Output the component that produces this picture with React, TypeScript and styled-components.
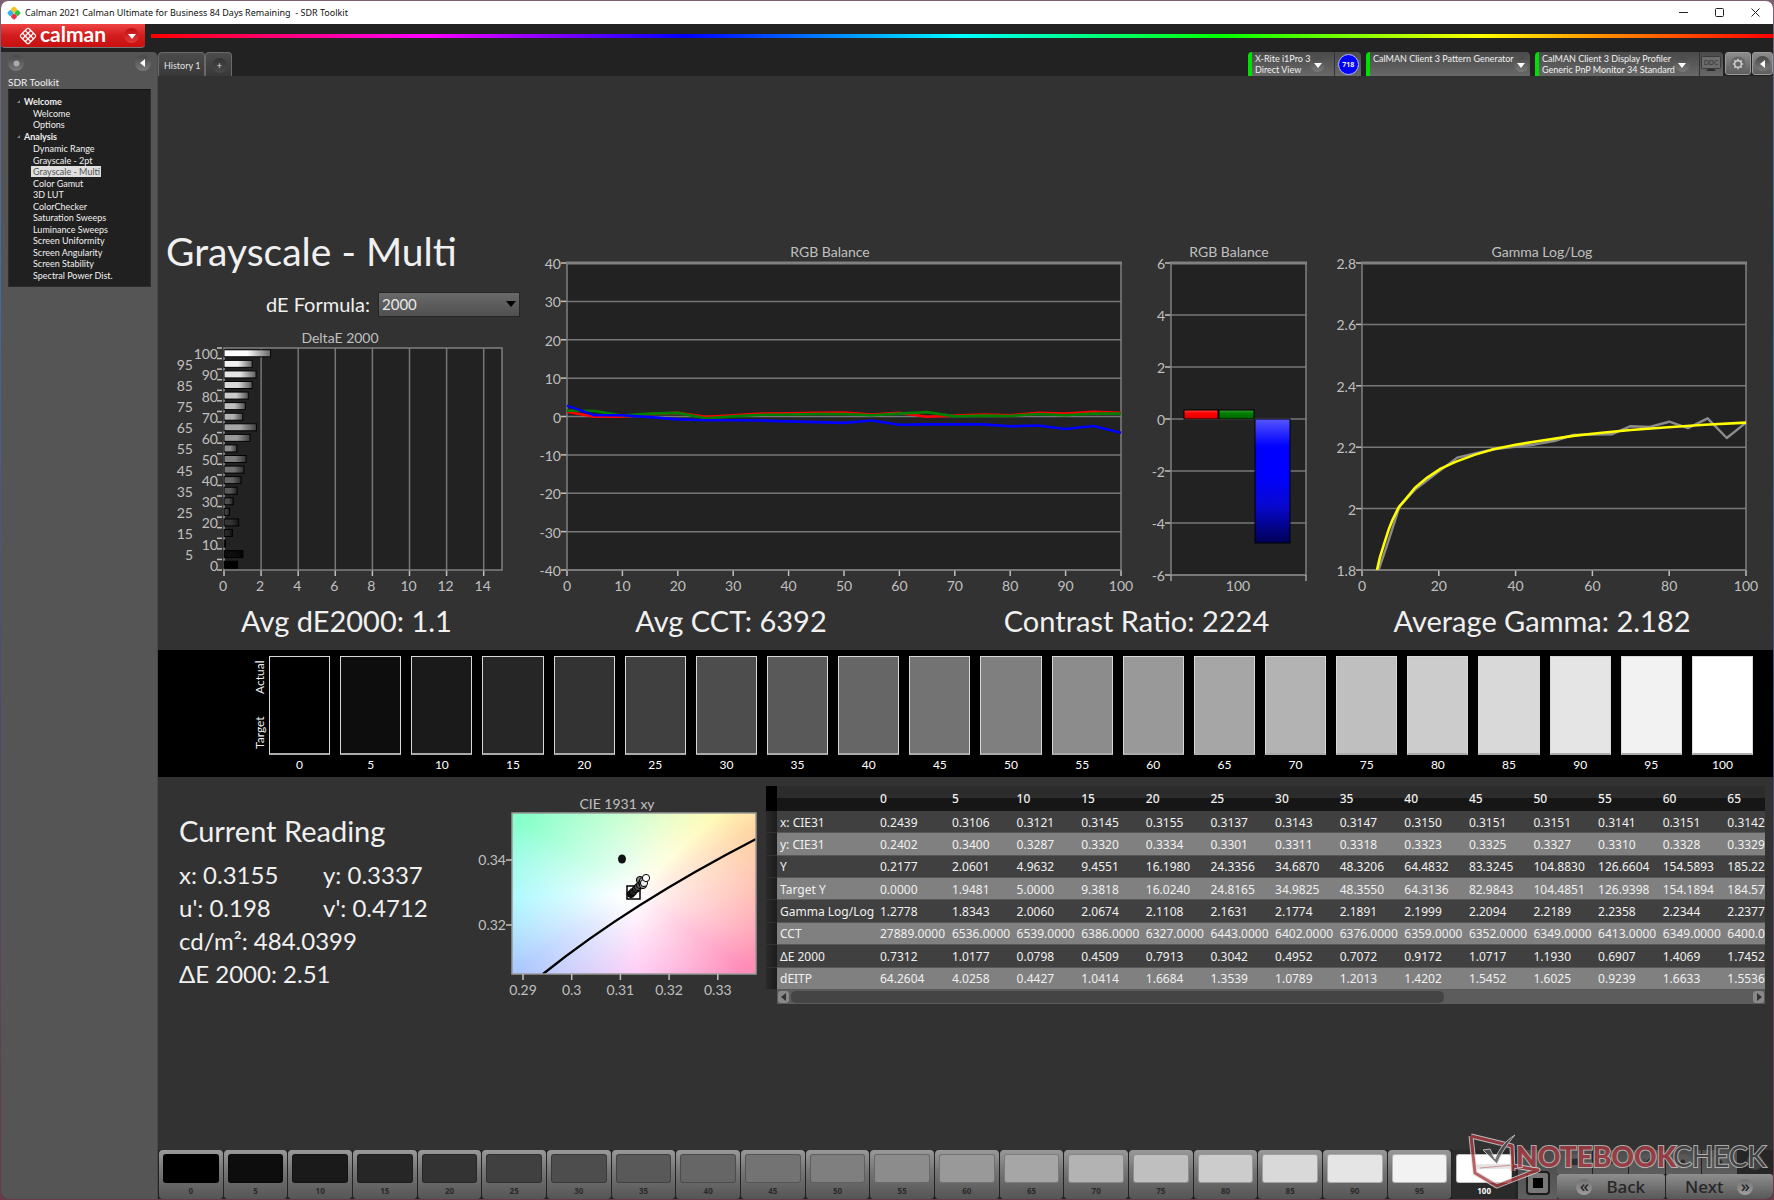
import React from "react";
import styled, { createGlobalStyle, css } from "styled-components";

const UI = `Lato, "Open Sans", sans-serif`;
const SYS = `"Noto Sans", "Open Sans", sans-serif`;

const Global = createGlobalStyle`
  * { box-sizing: border-box; }
  body { margin: 0; background: linear-gradient(#7d6070, #3f6f9f 20%, #4a4a70 60%, #6b3a4a); font-family: ${UI}; color: #f0f0f0; }
  button { font-family: inherit; border: 0; padding: 0; margin: 0; cursor: pointer; }
  ul { list-style: none; margin: 0; padding: 0; }
  svg { display: block; }
`;

/* ---------- data ---------- */

const LEVELS = Array.from({ length: 21 }, (_, i) => i * 5);
const DELTA_E = [
  0.7312, 1.0177, 0.0798, 0.4509, 0.7913, 0.3042, 0.4952, 0.7072, 0.9172, 1.0717, 1.193,
  0.6907, 1.4069, 1.7452, 1.01, 1.15, 1.31, 1.52, 1.73, 1.52, 2.51,
];
const BAL_RED = [1.5, 0.2, 0.2, 0.9, 1.2, 0.2, 0.6, 1.0, 1.1, 1.2, 1.3, 0.8, 1.2, 0.2, 0.5, 0.8, 0.6, 1.2, 1.0, 1.5, 1.2];
const BAL_GREEN = [1.8, 1.7, 0.5, 1.0, 1.2, -0.2, 0.3, 0.7, 0.8, 0.9, 0.9, 0.6, 1.0, 1.4, 0.3, 0.5, 0.4, 0.9, 0.6, 1.0, 1.0];
const BAL_BLUE = [3.1, 0.6, 0.6, 0.1, -0.5, -0.7, -0.7, -0.8, -1.0, -1.2, -1.4, -0.8, -1.9, -1.8, -1.8, -1.8, -2.3, -2.1, -3.0, -2.2, -4.0];

const GAMMA_TARGET: [number, number][] = [
  [3.9, 1.8], [4.7, 1.843], [5.8, 1.887], [6.9, 1.93], [7.9, 1.962], [9.5, 2.003], [11.7, 2.036],
  [13.8, 2.068], [17, 2.101], [20.5, 2.13], [24.5, 2.153], [29.3, 2.175], [34.2, 2.193], [40, 2.208],
  [46.5, 2.221], [55, 2.237], [62.5, 2.247], [70, 2.256], [79.7, 2.265], [89.3, 2.273], [100, 2.28],
];
const GAMMA_MEASURED: [number, number][] = [
  [4.3, 1.8], [6.4, 1.876], [9.8, 2.008], [14, 2.064], [19.7, 2.118], [24.8, 2.166], [30, 2.181],
  [34.8, 2.194], [45, 2.209], [50.3, 2.221], [55, 2.24], [65, 2.242], [69.8, 2.268], [74.9, 2.266],
  [80, 2.283], [84.9, 2.262], [90, 2.294], [95, 2.23], [100, 2.28],
];

const TABLE: [string, string[]][] = [
  ["x: CIE31", ["0.2439", "0.3106", "0.3121", "0.3145", "0.3155", "0.3137", "0.3143", "0.3147", "0.3150", "0.3151", "0.3151", "0.3141", "0.3151", "0.3142"]],
  ["y: CIE31", ["0.2402", "0.3400", "0.3287", "0.3320", "0.3334", "0.3301", "0.3311", "0.3318", "0.3323", "0.3325", "0.3327", "0.3310", "0.3328", "0.3329"]],
  ["Y", ["0.2177", "2.0601", "4.9632", "9.4551", "16.1980", "24.3356", "34.6870", "48.3206", "64.4832", "83.3245", "104.8830", "126.6604", "154.5893", "185.22"]],
  ["Target Y", ["0.0000", "1.9481", "5.0000", "9.3818", "16.0240", "24.8165", "34.9825", "48.3550", "64.3136", "82.9843", "104.4851", "126.9398", "154.1894", "184.57"]],
  ["Gamma Log/Log", ["1.2778", "1.8343", "2.0060", "2.0674", "2.1108", "2.1631", "2.1774", "2.1891", "2.1999", "2.2094", "2.2189", "2.2358", "2.2344", "2.2377"]],
  ["CCT", ["27889.0000", "6536.0000", "6539.0000", "6386.0000", "6327.0000", "6443.0000", "6402.0000", "6376.0000", "6359.0000", "6352.0000", "6349.0000", "6413.0000", "6349.0000", "6400.0"]],
  ["ΔE 2000", ["0.7312", "1.0177", "0.0798", "0.4509", "0.7913", "0.3042", "0.4952", "0.7072", "0.9172", "1.0717", "1.1930", "0.6907", "1.4069", "1.7452"]],
  ["dEITP", ["64.2604", "4.0258", "0.4427", "1.0414", "1.6684", "1.3539", "1.0789", "1.2013", "1.4202", "1.5452", "1.6025", "0.9239", "1.6633", "1.5536"]],
];

const TREE = [
  { name: "Welcome", items: ["Welcome", "Options"] },
  {
    name: "Analysis",
    items: [
      "Dynamic Range", "Grayscale - 2pt", "Grayscale - Multi", "Color Gamut", "3D LUT", "ColorChecker",
      "Saturation Sweeps", "Luminance Sweeps", "Screen Uniformity", "Screen Angularity", "Screen Stability",
      "Spectral Power Dist.",
    ],
  },
];

const gray = (pct: number) => {
  const v = Math.round(pct * 2.55);
  return `rgb(${v}, ${v}, ${v})`;
};

/* ---------- window frame ---------- */

const Window = styled.div`
  min-height: calc(100vh - 2px);
  margin: 1px;
  display: flex;
  flex-direction: column;
  border-radius: 7px;
  overflow: hidden;
  background: #222;
`;
const TitleBar = styled.header`
  height: 23px;
  display: flex;
  align-items: center;
  gap: 4px;
  padding-left: 6px;
  background: #fff;
  color: #111;
  font: 9px/14px ${SYS};
  white-space: pre;
`;
const WindowControls = styled.div`
  margin-left: auto;
  display: flex;
`;
const WindowButton = styled.button`
  width: 36px;
  height: 23px;
  background: none;
  display: grid;
  place-items: center;
`;
const Banner = styled.div`
  height: 28px;
  display: flex;
  align-items: flex-start;
  gap: 6px;
`;
const Brand = styled.button`
  width: 144px;
  height: 24px;
  display: flex;
  align-items: center;
  padding-left: 17px;
  color: #fff;
  border-radius: 0 0 4px 4px;
  background: linear-gradient(#e44, #d31d1d 50%, #c81010);
  border-bottom: 1px solid #777;
`;
const BrandName = styled.span`
  width: 86px;
  text-align: left;
  padding: 0 0 4px 2px;
  font: 700 21px/20px ${UI};
`;
const Rainbow = styled.div`
  flex: 1;
  height: 4px;
  margin-top: 10px;
  background: linear-gradient(90deg, #f00, #f0f 17%, #00f 33%, #0ff 50%, #0f0 66%, #ff0 82%, #f80 90%, #f00);
`;
const Round = styled.span<{ $size: number; $dark?: boolean }>`
  width: ${(p) => p.$size}px;
  height: ${(p) => p.$size}px;
  border-radius: 50%;
  display: grid;
  place-items: center;
  flex: none;
  background: ${(p) => (p.$dark ? "linear-gradient(#333, #4a4a4a)" : "linear-gradient(#484848, #7a7a7a)")};
`;
const StepMark = styled(Round)`
  background: linear-gradient(#707070, #a0a0a0);
  line-height: 14px;
  padding-bottom: 4px;
`;
const BrandArrow = styled(Round)`
  background: linear-gradient(#c01010, #e23a3a);
`;
const Body = styled.div`
  flex: 1;
  display: flex;
`;

/* ---------- sidebar ---------- */

const Sidebar = styled.nav`
  width: 157px;
  flex: none;
  background: #555;
  border-radius: 0 5px 0 0;
  border-right: 1px solid #484848;
  padding: 3px 6px 0 7px;
`;
const SideTop = styled.div`
  display: flex;
  justify-content: space-between;
  height: 20px;
`;
const SideButton = styled.button`
  background: none;
  height: 16px;
`;
const SideTitle = styled.div`
  font: 10px/14px ${UI};
`;
const Tree = styled.div`
  height: 198px;
  padding: 5px 0 0 8px;
  background: #202020;
  border: 1px solid #2d2d2d;
  border-top-color: #151515;
  font: 9px/11px ${UI};
`;
const TreeHead = styled.div`
  height: 12px;
  display: flex;
  align-items: center;
  gap: 4px;
  font-weight: 700;
`;
const TreeList = styled.ul<{ $rows: number }>`
  display: grid;
  grid-auto-rows: 1fr;
  height: ${(p) => (p.$rows > 2 ? 139 : 23)}px;
  margin-left: 14px;
  padding-top: 1px;
`;
const TreeItem = styled.a<{ $on: boolean }>`
  display: inline-block;
  padding: 0 1px 0 2px;
  color: inherit;
  text-decoration: none;
  ${(p) => p.$on && css`
    color: #555;
    background: #e0e0e0;
  `}
`;

/* ---------- tab bar ---------- */

const Main = styled.main`
  flex: 1;
  min-width: 0;
  display: flex;
  flex-direction: column;
  background: #323232;
`;
const TabBar = styled.div`
  height: 24px;
  display: flex;
  align-items: stretch;
  background: #222;
  font: 9px/11px ${UI};
`;
const Tab = styled.button`
  padding: 1px 4px 0 5px;
  min-width: 27px;
  height: 24px;
  display: grid;
  place-items: center;
  background: linear-gradient(#4c4c4c, #383838);
  border: 1px solid #6a6a6a;
  border-bottom: 0;
  border-radius: 4px 4px 0 0;
  color: #e4e4e4;
  font: 9px/11px ${UI};
`;
const Devices = styled.div`
  margin-left: auto;
  display: flex;
  gap: 5px;
`;
const Device = styled.div<{ $w: number }>`
  width: ${(p) => p.$w}px;
  display: flex;
  border-left: 4px solid #00e000;
  border-radius: 4px 4px 0 0;
  background: linear-gradient(#4a4a4a, #686868);
`;
const DeviceMain = styled.button`
  flex: 1;
  display: flex;
  align-items: center;
  justify-content: space-between;
  padding: 1px 9px 0 3px;
  background: none;
  color: #f0f0f0;
  font: 9px/11px ${UI};
  text-align: left;
  white-space: nowrap;
`;
const DeviceText = styled.span`
  align-self: flex-start;
`;
const DeviceSide = styled.div`
  width: 27px;
  display: grid;
  place-items: center;
  border-left: 1px solid #333;
`;
const Badge = styled.span`
  width: 21px;
  height: 21px;
  border-radius: 50%;
  border: 1px solid #b8b8ff;
  background: #00f;
  font: 700 7px/19px ${SYS};
  text-align: center;
`;
const Tools = styled.div`
  display: flex;
  gap: 1px;
  margin-left: -3px;
`;
const ToolButton = styled.button<{ $w: number }>`
  width: ${(p) => p.$w}px;
  height: 23px;
  display: grid;
  place-items: center;
  border: 1px solid #9a9a9a;
  border-radius: 3px;
  background: linear-gradient(#8c8c8c, #5e5e5e);
`;

/* ---------- content ---------- */

const Content = styled.div`
  flex: 1;
  display: flex;
  flex-direction: column;
  justify-content: center;
`;
const ChartRow = styled.section`
  display: grid;
  grid-template-columns: minmax(0, 372fr) minmax(0, 610fr) minmax(0, 190fr) minmax(0, 443fr);
`;
const Chart = styled.svg`
  width: 100%;
  height: auto;
  font: 14px ${UI};
  fill: #c0c0c0;
`;
const Heading = styled.h1`
  margin: 0;
  padding: 0 0 4px 8px;
  font: 400 39px/58px ${UI};
`;
const Formula = styled.div`
  height: 42px;
  display: flex;
  justify-content: flex-end;
  align-items: center;
  gap: 8px;
  padding: 0 10px 2px 0;
  font: 20px/24px ${UI};
`;
const SelectBox = styled.span`
  display: grid;
  align-items: center;
  width: 142px;
`;
const Select = styled.select`
  grid-area: 1 / 1;
  appearance: none;
  height: 25px;
  padding: 0 3px;
  border: 1px solid #262626;
  border-radius: 0;
  background: linear-gradient(#696969, #505050);
  color: #e8e8e8;
  font: 15px/20px ${UI};
`;
const SelectArrow = styled.svg`
  grid-area: 1 / 1;
  justify-self: end;
  margin-right: 4px;
  pointer-events: none;
`;
const Averages = styled.section`
  display: grid;
  grid-template-columns: 377fr 392fr 419fr 392fr 35fr;
  height: 50px;
  padding-bottom: 8px;
  font: 29px/42px ${UI};
  text-align: center;
  white-space: nowrap;
`;

const Strip = styled.section`
  height: 127px;
  display: flex;
  background: #000;
  padding: 6px 20px 0 95px;
`;
const StripLabels = styled.div`
  width: 16px;
  height: 98px;
  display: flex;
  flex-direction: column;
  justify-content: space-between;
  font: 12px/14px ${UI};
`;
const Vertical = styled.span`
  writing-mode: vertical-rl;
  transform: rotate(180deg);
  text-align: center;
  height: 42px;
`;
const Swatches = styled.div`
  flex: 1;
  display: grid;
  grid-template-columns: repeat(21, minmax(0, 1fr));
  gap: 10px;
`;
const SwatchCell = styled.div`
  font: 12px/20px ${UI};
  text-align: center;
  color: #fff;
`;
const Swatch = styled.div`
  height: 99px;
  border: 1px solid #d8d8d8;
  border-bottom: 2px solid #aaa;
`;

const Lower = styled.section`
  display: grid;
  grid-template-columns: minmax(0, 302fr) minmax(0, 306fr) minmax(0, 999fr);
  padding-right: 8px;
`;
const Reading = styled.div`
  padding: 32px 0 0 21px;
`;
const ReadingTitle = styled.h2`
  margin: 0 0 5px;
  font: 400 29px/44px ${UI};
`;
const ReadingGrid = styled.div`
  display: grid;
  grid-template-columns: 144px 1fr;
  font: 24px/33px ${UI};
  white-space: nowrap;
`;
const ReadingWide = styled.span`
  grid-column: 1 / -1;
`;

const TableArea = styled.div`
  padding-top: 9px;
  min-width: 0;
`;
const TableClip = styled.div`
  overflow: hidden;
`;
const DataTable = styled.table`
  width: 1023px;
  height: 204px;
  table-layout: fixed;
  border-collapse: collapse;
  font: 12px/16px ${SYS};
  text-align: left;
  color: #f0f0f0;
`;
const Corner = styled.th`
  width: 11px;
  padding: 0;
  background: #000;
`;
const Gutter = styled.td`
  padding: 0;
  background: linear-gradient(90deg, #2a2a2a, #1c1c1c);
  border-bottom: 1px solid #303030;
`;
const HeadCell = styled.th<{ $w?: number }>`
  height: 25px;
  width: ${(p) => (p.$w ? `${p.$w}px` : "auto")};
  padding: 0 3px;
  font-weight: 500;
  background: linear-gradient(#2c2c2c 50%, #161616 50%);
`;
const Row = styled.tr<{ $alt: boolean }>`
  background: ${(p) => (p.$alt ? "#808080" : "#404040")};
  border-bottom: 1px solid #585858;
`;
const RowHead = styled.th`
  padding: 2px 3px 0;
  font-weight: 400;
  white-space: nowrap;
`;
const Cell = styled.td`
  padding: 2px 3px 0;
  white-space: nowrap;
`;
const ScrollBar = styled.div`
  margin-left: 11px;
  height: 14px;
  padding: 1px;
  display: flex;
  align-items: center;
  gap: 2px;
  background: #5c5c5c;
`;
const ScrollButton = styled.button`
  width: 11px;
  height: 12px;
  display: grid;
  place-items: center;
  border-radius: 3px;
  background: #888;
`;
const ScrollTrack = styled.div`
  flex: 1;
`;
const ScrollThumb = styled.div`
  width: 68%;
  height: 12px;
  border-radius: 5px;
  background: #444;
`;

/* ---------- footer ---------- */

const Footer = styled.footer`
  position: relative;
  height: 49px;
  display: flex;
  background: #232323;
`;
const Patches = styled.div`
  flex: 1;
  display: grid;
  grid-template-columns: repeat(21, minmax(0, 1fr));
  gap: 1px;
  padding: 0 2px 0 1px;
`;
const Patch = styled.button<{ $on: boolean }>`
  display: flex;
  flex-direction: column;
  padding: 4px 4px 0;
  border-radius: 4px;
  background: ${(p) => (p.$on ? "#2a2a2a" : "linear-gradient(#999, #777 40%, #555)")};
  color: ${(p) => (p.$on ? "#fff" : "#2a2a2a")};
  font: 700 8px/16px ${SYS};
  text-align: center;
`;
const PatchColor = styled.span`
  height: 29px;
  border-radius: 3px;
  border: 1px solid rgba(0, 0, 0, 0.25);
`;
const StopPanel = styled.div`
  width: 39px;
  display: flex;
  flex-direction: column;
  align-items: center;
  justify-content: flex-end;
  padding-bottom: 4px;
  background: linear-gradient(#484848, #606060);
`;
const StopButton = styled.button`
  width: 24px;
  height: 24px;
  border: 2px solid #1c1c1c;
  border-radius: 4px;
  background: #777;
  display: grid;
  place-items: center;
`;
const StopMark = styled.span`
  width: 10px;
  height: 10px;
  background: #000;
`;
const Transport = styled.div`
  width: 216px;
  display: grid;
  grid-template-rows: 24px 25px;
`;
const Keys = styled.div`
  display: grid;
  grid-template-columns: repeat(6, 1fr);
  gap: 1px;
`;
const Key = styled.button<{ $off?: boolean }>`
  display: grid;
  place-items: center;
  background: ${(p) => (p.$off ? "#262626" : "linear-gradient(#4c4c4c, #5e5e5e)")};
`;
const Steps = styled.div`
  display: grid;
  grid-template-columns: 1fr 1fr;
  gap: 1px;
`;
const Step = styled.button`
  display: flex;
  align-items: center;
  justify-content: center;
  gap: 14px;
  border-radius: 3px;
  background: linear-gradient(#8e8e8e, #585858);
  color: #262626;
  font: 500 17px/20px ${SYS};
`;
const Watermark = styled.svg`
  position: absolute;
  right: 0;
  bottom: 10px;
  pointer-events: none;
`;

/* ---------- drawings ---------- */

const Caret = ({ dir = "down", color = "#fff", size = 8 }: { dir?: "down" | "left" | "right"; color?: string; size?: number }) => {
  const d = { down: "M0 2h8L4 7z", left: "M6 0v8L1 4z", right: "M2 0v8l5-4z" }[dir];
  return (
    <svg width={size} height={size} viewBox="0 0 8 8" aria-hidden="true">
      <path d={d} fill={color} />
    </svg>
  );
};

const AppIcon = () => (
  <svg width="14" height="14" viewBox="0 0 14 14" aria-hidden="true">
    <g transform="rotate(45 7 7)">
      <rect x="2" y="2" width="5" height="5" rx="1.5" fill="#f6c416" />
      <rect x="7" y="2" width="5" height="5" rx="1.5" fill="#35c43a" />
      <rect x="2" y="7" width="5" height="5" rx="1.5" fill="#2bb5e8" />
      <rect x="7" y="7" width="5" height="5" rx="1.5" fill="#f0304a" />
    </g>
  </svg>
);

const BrandMark = () => (
  <svg width="20" height="20" viewBox="0 0 20 20" aria-hidden="true">
    <g transform="rotate(45 10 10)">
      <rect x="3.5" y="3.5" width="13" height="13" rx="2.5" fill="#fff" />
      {[0, 1, 2].map((r) =>
        [0, 1, 2].map((c) => (
          <rect key={`${r}${c}`} x={4.7 + c * 3.9} y={4.7 + r * 3.9} width="2.8" height="2.8" rx="1" fill="#d62222" />
        ))
      )}
    </g>
  </svg>
);

const Gear = () => (
  <svg width="16" height="16" viewBox="0 0 16 16" aria-hidden="true">
    <circle cx="8" cy="8" r="7.5" fill="#666" />
    <g stroke="#ccc" strokeWidth="1.6">
      {[0, 45, 90, 135].map((a) => (
        <path key={a} d="M8 2.8v10.4" transform={`rotate(${a} 8 8)`} />
      ))}
    </g>
    <circle cx="8" cy="8" r="3.3" fill="#666" stroke="#ccc" strokeWidth="1.4" />
  </svg>
);

const DdcIcon = () => (
  <svg width="20" height="16" viewBox="0 0 20 16" aria-hidden="true">
    <rect x="0.5" y="0.500" width="19" height="12" rx="1" fill="#6c6c6c" stroke="#3a3a3a" />
    <path d="M7 13h6l2 2H5z" fill="#2a2a2a" />
    <text x="10" y="9" fontSize="7" fill="#333" textAnchor="middle" fontFamily="Noto Sans">DDC</text>
  </svg>
);

type Frame = { x: number; y: number; w: number; h: number };

const PlotBox = ({ x, y, w, h }: Frame) => <rect x={x} y={y} width={w} height={h} fill="#222" />;
const PlotEdge = ({ x, y, w, h, thick }: Frame & { thick?: boolean }) => (
  <g stroke="#808080" fill="none">
    <rect x={x} y={y} width={w} height={h} strokeWidth="1.5" />
    {thick && <path d={`M${x - 1} ${y}h${w + 2}`} strokeWidth="3" />}
  </g>
);
const YAxis = ({ f, labels }: { f: Frame; labels: string[] }) => (
  <g>
    {labels.map((t, i) => {
      const y = f.y + (f.h * i) / (labels.length - 1);
      return (
        <g key={t}>
          <path d={`M${f.x - 6} ${y}h6`} stroke="#c0c0c0" strokeWidth="1.5" />
          <path d={`M${f.x} ${y}h${f.w}`} stroke="#777" strokeWidth="1.5" />
          <text x={f.x - 6} y={y + 6} textAnchor="end">{t}</text>
        </g>
      );
    })}
  </g>
);
const XAxis = ({ f, labels, y }: { f: Frame; labels: string[]; y: number }) => (
  <g>
    {labels.map((t, i) => {
      const x = f.x + (f.w * i) / (labels.length - 1);
      return (
        <g key={t}>
          <path d={`M${x} ${f.y + f.h}v6`} stroke="#c0c0c0" strokeWidth="1.5" />
          <text x={x} y={y} textAnchor="middle">{t}</text>
        </g>
      );
    })}
  </g>
);

function DeltaEChart() {
  const f = { x: 66, y: 22, w: 278, h: 222 };
  const pitch = f.h / 21;
  const unit = 18.55;
  return (
    <Chart viewBox="0 0 372 274" role="img" aria-label="DeltaE 2000">
      <defs>
        <linearGradient id="shade" x1="0" x2="1" y1="0" y2="0">
          <stop offset="0.5" stopColor="#000" stopOpacity="0" />
          <stop offset="1" stopColor="#000" stopOpacity="0.6" />
        </linearGradient>
      </defs>
      <text x="182" y="17" textAnchor="middle">DeltaE 2000</text>
      <PlotBox {...f} />
      {[0, 2, 4, 6, 8, 10, 12, 14].map((v) => (
        <g key={v}>
          <path d={`M${f.x + v * unit} ${f.y}v${f.h}`} stroke="#777" strokeWidth="1.5" />
          <path d={`M${f.x + v * unit} ${f.y + f.h}v6`} stroke="#c0c0c0" strokeWidth="1.5" />
          <text x={f.x + v * unit - 1} y="265" textAnchor="middle">{v}</text>
        </g>
      ))}
      <PlotEdge {...f} />
      {LEVELS.map((l, i) => {
        const y = f.y + f.h - (i + 0.5) * pitch;
        return (
          <g key={l}>
            <path d={`M${f.x - 7} ${y - pitch / 2}h5`} stroke="#c0c0c0" strokeWidth="1.5" />
            <rect x={f.x} y={y - 3.5} width={DELTA_E[i] * unit} height="7" fill={gray(l)} stroke="#000" />
            <rect x={f.x} y={y - 3.5} width={DELTA_E[i] * unit} height="7" fill="url(#shade)" />
            <text x={l % 10 ? 35 : 60} y={y + 6} textAnchor="end">{l}</text>
          </g>
        );
      })}
      <path d={`M${f.x - 7} ${f.y + f.h}h5`} stroke="#c0c0c0" strokeWidth="1.5" />
    </Chart>
  );
}

function BalanceChart() {
  const f = { x: 37, y: 41, w: 554, h: 307 };
  const line = (vals: number[]) =>
    vals.map((v, i) => `${f.x + (i * f.w) / 20},${f.y + f.h / 2 + 1 - (v * f.h) / 80}`).join(" ");
  return (
    <Chart viewBox="0 0 610 378" role="img" aria-label="RGB Balance by level">
      <text x="300" y="35" textAnchor="middle">RGB Balance</text>
      <PlotBox {...f} />
      <YAxis f={f} labels={["40", "30", "20", "10", "0", "-10", "-20", "-30", "-40"]} />
      <XAxis f={f} labels={["0", "10", "20", "30", "40", "50", "60", "70", "80", "90", "100"]} y={369} />
      <PlotEdge {...f} thick />
      <g fill="none" strokeWidth="2.6" strokeLinejoin="round">
        <polyline points={line(BAL_RED)} stroke="#f00" />
        <polyline points={line(BAL_GREEN)} stroke="#008000" />
        <polyline points={line(BAL_BLUE)} stroke="#00f" />
      </g>
    </Chart>
  );
}

function BalanceBars() {
  const f = { x: 31, y: 41, w: 135, h: 312 };
  return (
    <Chart viewBox="0 0 190 378" role="img" aria-label="RGB Balance at 100">
      <defs>
        <linearGradient id="bar-r" x1="0" x2="0" y1="0" y2="1">
          <stop offset="0" stopColor="#f44" /><stop offset="0.35" stopColor="#f00" /><stop offset="1" stopColor="#d00" />
        </linearGradient>
        <linearGradient id="bar-g" x1="0" x2="0" y1="0" y2="1">
          <stop offset="0" stopColor="#3a9a3a" /><stop offset="0.35" stopColor="#008000" /><stop offset="1" stopColor="#006000" />
        </linearGradient>
        <linearGradient id="bar-b" x1="0" x2="0" y1="0" y2="1">
          <stop offset="0" stopColor="#55f" /><stop offset="0.22" stopColor="#00f" /><stop offset="0.45" stopColor="#00f" />
          <stop offset="0.7" stopColor="#0808d0" /><stop offset="1" stopColor="#005" />
        </linearGradient>
      </defs>
      <text x="89" y="35" textAnchor="middle">RGB Balance</text>
      <PlotBox {...f} />
      <YAxis f={f} labels={["6", "4", "2", "0", "-2", "-4", "-6"]} />
      <PlotEdge {...f} thick />
      <path d="M31 353v6M166 353v6" stroke="#a0a0a0" strokeWidth="1.5" />
      <g stroke="#000">
        <rect x="44" y="188" width="34" height="9" fill="url(#bar-r)" />
        <rect x="79" y="188" width="35" height="9" fill="url(#bar-g)" />
        <rect x="115" y="197" width="35" height="124" fill="url(#bar-b)" />
      </g>
      <text x="98" y="369" textAnchor="middle">100</text>
    </Chart>
  );
}

function GammaChart() {
  const f = { x: 32, y: 41, w: 384, h: 307 };
  const line = (pts: [number, number][]) =>
    pts.map(([x, g]) => `${f.x + (x * f.w) / 100},${f.y + (2.8 - g) * f.h}`).join(" ");
  return (
    <Chart viewBox="0 0 443 378" role="img" aria-label="Gamma Log/Log">
      <text x="212" y="35" textAnchor="middle">Gamma Log/Log</text>
      <PlotBox {...f} />
      <YAxis f={f} labels={["2.8", "2.6", "2.4", "2.2", "2", "1.8"]} />
      <XAxis f={f} labels={["0", "20", "40", "60", "80", "100"]} y={369} />
      <PlotEdge {...f} thick />
      <g fill="none" strokeLinejoin="round">
        <polyline points={line(GAMMA_MEASURED)} stroke="#8c8c8c" strokeWidth="2.4" />
        <polyline points={line(GAMMA_TARGET)} stroke="#ff0" strokeWidth="2.6" />
      </g>
    </Chart>
  );
}

const Gamut = styled.div`
  height: 161px;
  background:
    radial-gradient(ellipse 62% 66% at 48% 52%, #fff 4%, rgba(255, 255, 255, 0.6) 38%, rgba(255, 255, 255, 0) 100%),
    conic-gradient(from 0deg at 50% 50%, #c4ffc4 0deg, #fffbb4 46deg, #ffd6a4 62deg, #ffb4a8 90deg, #ff8cb8 123deg,
      #ffbcf4 178deg, #aac8ff 237deg, #98f8ff 268deg, #86ffca 303deg, #c4ffc4 360deg);
`;

const CIE_POINTS: [number, number, string][] = [
  [171, 117, "#111"], [173, 115, "#222"], [176, 112, "#333"], [178, 110, "#555"], [180, 108, "#666"],
  [180, 103, "#888"], [182, 106, "#888"], [183, 108, "#999"], [183, 104, "#bbb"], [184, 106, "#eee"],
  [186, 101, "#fff"],
];

function CieChart() {
  return (
    <Chart viewBox="0 0 306 227" role="img" aria-label="CIE 1931 xy">
      <text x="157" y="32" textAnchor="middle">CIE 1931 xy</text>
      <foreignObject x="52" y="36" width="244" height="161"><Gamut /></foreignObject>
      <path d="M83 197Q170 127 296 62" fill="none" stroke="#000" strokeWidth="2.4" />
      <rect x="52" y="36" width="244" height="161" fill="none" stroke="#999" strokeWidth="1.5" />
      <ellipse cx="162" cy="82" rx="4" ry="4.5" fill="#111" />
      <rect x="167" y="109" width="13" height="13" fill="none" stroke="#000" strokeWidth="1.5" />
      {CIE_POINTS.map(([x, y, c]) => (
        <circle key={`${x}-${y}`} cx={x} cy={y} r="3.6" fill={c} stroke="#000" strokeWidth="1" />
      ))}
      {["0.29", "0.3", "0.31", "0.32", "0.33"].map((t, i) => (
        <g key={t}>
          <path d={`M${63 + i * 48.7} 197v6`} stroke="#c0c0c0" strokeWidth="1.5" />
          <text x={63 + i * 48.7} y="218" textAnchor="middle">{t}</text>
        </g>
      ))}
      {["0.34", "0.32"].map((t, i) => (
        <g key={t}>
          <path d={`M46 ${83 + i * 65}h6`} stroke="#c0c0c0" strokeWidth="1.5" />
          <text x="46" y={88 + i * 65} textAnchor="end">{t}</text>
        </g>
      ))}
    </Chart>
  );
}

const KEY_PATHS = ["M3 3h8v8H3z", "M4 2l8 5-8 5z", "M3 2v10M11 2L5 7l6 5z", "M4 7a3 3 0 1 1 6 0 3 3 0 1 1-6 0", "M2 7h10M8 3l4 4-4 4", "M4 7h6"];

const KeyIcon = ({ d }: { d: string }) => (
  <svg width="18" height="18" viewBox="-2 -2 18 18" aria-hidden="true">
    <circle cx="7" cy="7" r="8" fill="#5f5f5f" opacity="0.5" />
    <path d={d} fill="#2c2c2c" stroke="#2c2c2c" transform="translate(2 2) scale(.7)" />
  </svg>
);

const WatermarkLogo = () => (
  <Watermark width="308" height="56" viewBox="0 0 308 56" aria-label="Notebookcheck">
    <g fill="none" strokeLinejoin="round" opacity="0.8">
      <path d="M6 3l41 10 1 25M6 3l4 37 22 13 41-16-25-4M10 34l38-1" stroke="#ddd" strokeWidth="5" />
      <path d="M6 3l41 10 1 25M6 3l4 37 22 13 41-16-25-4" stroke="#a83a40" strokeWidth="3" />
      <path d="M15 35l33-3" stroke="#c87a7c" strokeWidth="1" />
      <path d="M18 17l7-1 5 10c4-10 10-18 20-24-8 9-14 19-18 29z" fill="#555" stroke="#ddd" strokeWidth="1" />
    </g>
    <g fontFamily="Lato" fontSize="28" stroke="#c8c8c8" strokeWidth="2" paintOrder="stroke" opacity="0.8">
      <text x="51" y="34" fontWeight="900" fill="#a83a40">NOTEBOOK</text>
      <text x="208" y="34" fill="#444">CHECK</text>
    </g>
  </Watermark>
);

/* ---------- page ---------- */

export default function App() {
  return (
    <>
      <Global />
      <Window>
        <TitleBar>
          <AppIcon />
          <span>{"Calman 2021 Calman Ultimate for Business 84 Days Remaining  - SDR Toolkit"}</span>
          <WindowControls>
            <WindowButton aria-label="Minimize">
              <svg width="9" height="9"><path d="M0 4.5h9" stroke="#222" /></svg>
            </WindowButton>
            <WindowButton aria-label="Maximize">
              <svg width="9" height="9"><rect x=".5" y=".5" width="8" height="8" rx="1" fill="none" stroke="#222" /></svg>
            </WindowButton>
            <WindowButton aria-label="Close">
              <svg width="9" height="9"><path d="M.5 .5l8 8M8.500 .5l-8 8" stroke="#222" /></svg>
            </WindowButton>
          </WindowControls>
        </TitleBar>
        <Banner>
          <Brand>
            <BrandMark />
            <BrandName>calman</BrandName>
            <BrandArrow $size={15}><Caret /></BrandArrow>
          </Brand>
          <Rainbow />
        </Banner>
        <Body>
          <Sidebar>
            <SideTop>
              <SideButton aria-label="Record">
                <Round $size={16}><svg width="7" height="7"><circle cx="3.500" cy="3.500" r="3" fill="#aaa" /></svg></Round>
              </SideButton>
              <SideButton aria-label="Collapse">
                <Round $size={16}><Caret dir="left" /></Round>
              </SideButton>
            </SideTop>
            <SideTitle>SDR Toolkit</SideTitle>
            <Tree>
              {TREE.map((group) => (
                <div key={group.name}>
                  <TreeHead>
                    <svg width="3" height="3" aria-hidden="true"><path d="M3 0v3H0z" fill="#888" /></svg>
                    {group.name}
                  </TreeHead>
                  <TreeList $rows={group.items.length}>
                    {group.items.map((t) => (
                      <li key={t}><TreeItem href="#" $on={t === "Grayscale - Multi"}>{t}</TreeItem></li>
                    ))}
                  </TreeList>
                </div>
              ))}
            </Tree>
          </Sidebar>
          <Main>
            <TabBar>
              <Tab>History 1</Tab>
              <Tab aria-label="Add history"><Round $size={15} $dark>+</Round></Tab>
              <Devices>
                <Device $w={113}>
                  <DeviceMain>
                    <DeviceText>X-Rite i1Pro 3<br />Direct View</DeviceText>
                    <Round $size={15}><Caret /></Round>
                  </DeviceMain>
                  <DeviceSide><Badge>718</Badge></DeviceSide>
                </Device>
                <Device $w={164}>
                  <DeviceMain>
                    <DeviceText>CalMAN Client 3 Pattern Generator</DeviceText>
                    <Round $size={15}><Caret /></Round>
                  </DeviceMain>
                </Device>
                <Device $w={188}>
                  <DeviceMain>
                    <DeviceText>CalMAN Client 3 Display Profiler<br />Generic PnP Monitor 34 Standard</DeviceText>
                    <Round $size={15}><Caret /></Round>
                  </DeviceMain>
                  <DeviceSide><DdcIcon /></DeviceSide>
                </Device>
                <Tools>
                  <ToolButton $w={26} aria-label="Settings"><Gear /></ToolButton>
                  <ToolButton $w={21} aria-label="Collapse panel"><Round $size={15}><Caret dir="left" /></Round></ToolButton>
                </Tools>
              </Devices>
            </TabBar>

            <Content>
              <ChartRow>
                <div>
                  <Heading>Grayscale - Multi</Heading>
                  <Formula>
                    <label htmlFor="formula">dE Formula:</label>
                    <SelectBox>
                      <Select id="formula" defaultValue="2000"><option>2000</option></Select>
                      <SelectArrow width="10" height="6"><path d="M0 0h10L5 6z" fill="#000" /></SelectArrow>
                    </SelectBox>
                  </Formula>
                  <DeltaEChart />
                </div>
                <BalanceChart />
                <BalanceBars />
                <GammaChart />
              </ChartRow>
              <Averages>
                <span>Avg dE2000: 1.1</span>
                <span>Avg CCT: 6392</span>
                <span>Contrast Ratio: 2224</span>
                <span>Average Gamma: 2.182</span>
              </Averages>
              <Strip>
                <StripLabels>
                  <Vertical>Actual</Vertical>
                  <Vertical>Target</Vertical>
                </StripLabels>
                <Swatches>
                  {LEVELS.map((l) => (
                    <SwatchCell key={l}>
                      <Swatch style={{ background: gray(l) }} />
                      {l}
                    </SwatchCell>
                  ))}
                </Swatches>
              </Strip>
              <Lower>
                <Reading>
                  <ReadingTitle>Current Reading</ReadingTitle>
                  <ReadingGrid>
                    <span>x: 0.3155</span><span>y: 0.3337</span>
                    <span>u': 0.198</span><span>v': 0.4712</span>
                    <ReadingWide>cd/m²: 484.0399</ReadingWide>
                    <ReadingWide>ΔE 2000: 2.51</ReadingWide>
                  </ReadingGrid>
                </Reading>
                <CieChart />
                <TableArea>
                  <TableClip>
                    <DataTable>
                      <thead>
                        <tr>
                          <Corner />
                          <HeadCell $w={100} />
                          {LEVELS.slice(0, 14).map((l, i) => (
                            <HeadCell key={l} scope="col" $w={i === 0 ? 72 : undefined}>{l}</HeadCell>
                          ))}
                        </tr>
                      </thead>
                      <tbody>
                        {TABLE.map(([name, vals], i) => (
                          <Row key={name} $alt={i % 2 === 1}>
                            <Gutter />
                            <RowHead scope="row">{name}</RowHead>
                            {vals.map((v, j) => <Cell key={j}>{v}</Cell>)}
                          </Row>
                        ))}
                      </tbody>
                    </DataTable>
                  </TableClip>
                  <ScrollBar>
                    <ScrollButton aria-label="Scroll left"><Caret dir="left" color="#333" /></ScrollButton>
                    <ScrollTrack><ScrollThumb /></ScrollTrack>
                    <ScrollButton aria-label="Scroll right"><Caret dir="right" color="#333" /></ScrollButton>
                  </ScrollBar>
                </TableArea>
              </Lower>
            </Content>

            <Footer>
              <Patches>
                {LEVELS.map((l) => (
                  <Patch key={l} $on={l === 100}>
                    <PatchColor style={{ background: gray(l) }} />
                    {l}
                  </Patch>
                ))}
              </Patches>
              <StopPanel>
                <StopButton aria-label="Stop"><StopMark /></StopButton>
              </StopPanel>
              <Transport>
                <Keys>
                  {KEY_PATHS.map((d, i) => (
                    <Key key={d} $off={i === 5} aria-label={`Transport ${i + 1}`}><KeyIcon d={d} /></Key>
                  ))}
                </Keys>
                <Steps>
                  <Step><StepMark $size={16}>«</StepMark>Back</Step>
                  <Step>Next<StepMark $size={16}>»</StepMark></Step>
                </Steps>
              </Transport>
              <WatermarkLogo />
            </Footer>
          </Main>
        </Body>
      </Window>
    </>
  );
}
